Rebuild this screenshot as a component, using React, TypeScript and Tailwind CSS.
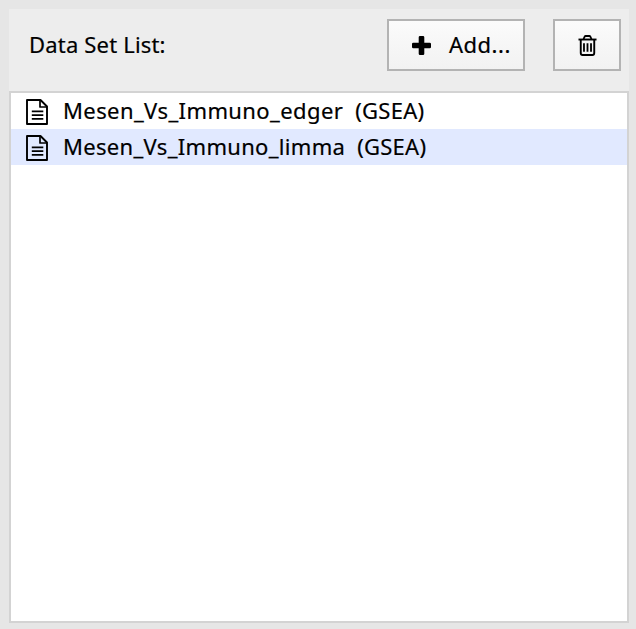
const dataSets = [
  { name: "Mesen_Vs_Immuno_edger", type: "(GSEA)", selected: false, tracking: "tracking-[0.4px]" },
  { name: "Mesen_Vs_Immuno_limma", type: "(GSEA)", selected: true, tracking: "tracking-[0.31px]" },
];

function FileIcon() {
  return (
    <svg width="22" height="26" viewBox="0 0 22 26" fill="none" stroke="#000" strokeWidth="1.9" strokeLinejoin="round" className="mt-0.5 shrink-0">
      <path d="M1 1h13.500l6.500 6.500V25H1z" />
      <path d="M14 1v7h7" strokeWidth="1.7" />
      <path d="M5.800 12.300h11.500M5.800 16.100h11.500M5.800 19.900h11.500" strokeWidth="1.7" />
    </svg>
  );
}

function TrashIcon() {
  return (
    <svg width="19" height="21" viewBox="0 0 20 22" fill="none" stroke="#000" className="mt-px ml-px">
      <path d="M0.500 4.700h19" strokeWidth="2" />
      <path d="M5.800 4.200l1.200-2.400Q7.300 1 8 1h4q.7 0 1 .8l1.200 2.400" strokeWidth="1.900" />
      <path d="M2.900 5v13.800Q2.900 21 4.800 21h10.400q1.900 0 1.900-2.200V5" strokeWidth="2" />
      <path d="M6.300 8.500v9M10 8.500v9M13.700 8.500v9" strokeWidth="1.900" />
    </svg>
  );
}

function PlusIcon() {
  return (
    <svg width="19" height="19" viewBox="0 0 19 19">
      <path d="M8 0h3q1.300 0 1.300 1.300v5.400h5.400Q19 6.700 19 8v3q0 1.300-1.300 1.300h-5.400v5.400Q12.300 19 11 19H8q-1.300 0-1.300-1.300v-5.400H1.300Q0 12.300 0 11V8q0-1.300 1.300-1.300h5.400V1.300Q6.700 0 8 0z" />
    </svg>
  );
}

export default function App() {
  return (
    <div className="flex h-[629px] w-[636px] flex-col bg-[#e6e6e6] pt-[9px] pr-[7px] pb-[6px] pl-[9px] font-['Noto_Sans',sans-serif] text-[22px] leading-[34px] whitespace-pre text-black [-webkit-text-stroke:0.2px_black]">
      <header className="flex h-[82px] shrink-0 items-start bg-[#ededed] pt-[10px] pr-2 pl-5">
        <span className="mt-2 flex-1 tracking-[0.18px]">Data Set List:</span>
        <button className="flex h-[52px] w-[138px] items-center border-2 border-[#b3b3b3] bg-linear-to-b from-[#fbfbfb] to-[#f2f2f2] pl-[23px]">
          <PlusIcon />
          <span className="-mt-0.5 ml-[18px] tracking-[0.5px]">Add...</span>
        </button>
        <button aria-label="Delete" className="ml-7 flex h-[52px] w-[68px] items-center justify-center border-2 border-[#b3b3b3] bg-linear-to-b from-[#fbfbfb] to-[#f2f2f2]">
          <TrashIcon />
        </button>
      </header>
      <ul className="flex-1 border-2 border-[#d3d3d3] bg-white">
        {dataSets.map((d) => (
          <li key={d.name} className={`flex h-9 items-center pl-[15px] ${d.selected ? "bg-[#e1e9ff]" : ""}`}>
            <FileIcon />
            <span className={`-mt-0.5 ml-[15px] ${d.tracking}`}>{d.name}</span>
            <span className="-mt-0.5 ml-[12px] tracking-[0.25px]">{d.type}</span>
          </li>
        ))}
      </ul>
    </div>
  );
}
